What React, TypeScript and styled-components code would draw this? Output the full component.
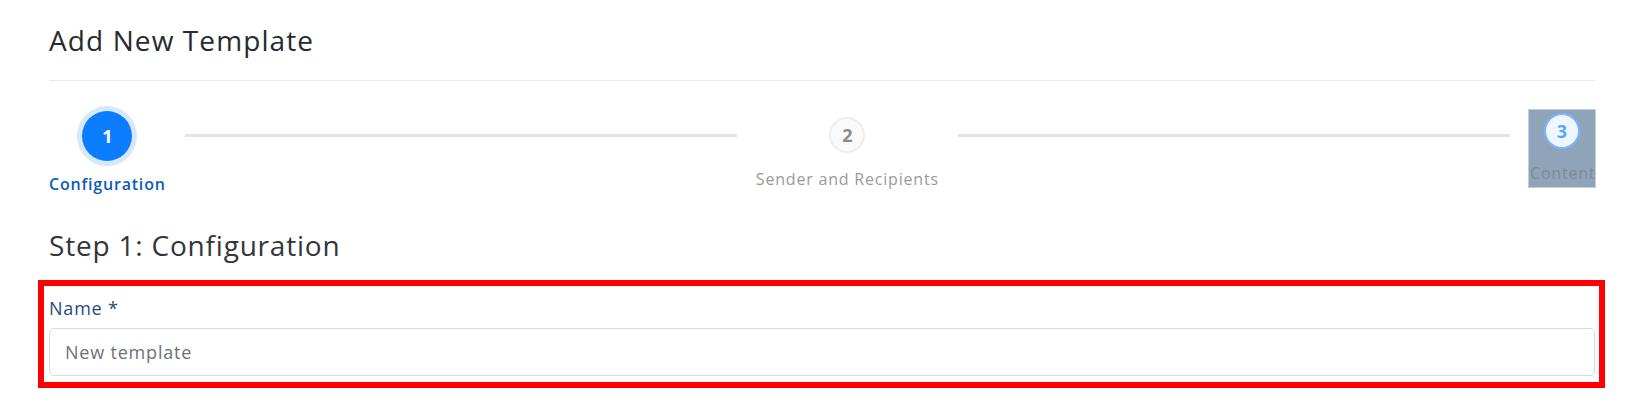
import React from "react";
import styled, { createGlobalStyle, css } from "styled-components";

const Global = createGlobalStyle`
  html, body { margin: 0; padding: 0; background: #ffffff; }
  body { font-family: "Open Sans", "Noto Sans", sans-serif; color: #2b2f33; }
  * { box-sizing: border-box; }
`;

const Page = styled.div`
  padding: 0 45px 0 49px;
`;

const Header = styled.div`
  height: 81px;
  border-bottom: 1px solid #e9e9ec;
  padding-top: 23px;
`;

const Title = styled.h1`
  margin: 0;
  font-size: 28px;
  line-height: 34px;
  font-weight: 400;
  letter-spacing: 1.1px;
  color: #272b30;
`;

const StepsRow = styled.div`
  display: flex;
  align-items: flex-start;
`;

type StepState = "active" | "idle" | "hover";

const StepItem = styled.div<{ $state: StepState }>`
  position: relative;
  display: flex;
  flex-direction: column;
  align-items: center;
  flex: none;
  ${({ $state }) =>
    $state === "active"
      ? css`
          margin-top: 30px;
          gap: 12px;
        `
      : $state === "idle"
      ? css`
          margin-top: 36px;
          gap: 15px;
        `
      : css`
          margin-top: 29px;
          width: 66px;
          gap: 13px;
          padding: 3px 0 3px;
          background: #8fa4b8;
          outline: 1px solid #c4ced8;
        `}
`;

const HoverZone = styled.div`
  position: absolute;
  left: -37px;
  right: -38px;
  top: -37px;
  bottom: -37px;
  background: #fbfbfc;
  z-index: -1;
`;

const Circle = styled.div<{ $state: StepState }>`
  display: flex;
  align-items: center;
  justify-content: center;
  border-radius: 50%;
  font-weight: 700;
  font-size: 18px;
  ${({ $state }) =>
    $state === "active"
      ? css`
          width: 50px;
          height: 50px;
          background: #0d7dff;
          color: #ffffff;
          box-shadow: 0 0 0 5px #d8e8fb, 0 2px 10px rgba(0, 0, 0, 0.06);
        `
      : $state === "idle"
      ? css`
          width: 36px;
          height: 36px;
          background: #fafafa;
          border: 2px solid #eeeeee;
          color: #8a8a8a;
        `
      : css`
          width: 36px;
          height: 36px;
          background: #eef6ff;
          border: 2px solid #79b6ff;
          color: #5aa5ff;
        `}
`;

const StepLabel = styled.div<{ $state: StepState }>`
  font-size: 16px;
  line-height: 22px;
  letter-spacing: 0.8px;
  white-space: nowrap;
  ${({ $state }) =>
    $state === "active"
      ? css`
          color: #0d5cb6;
          font-weight: 600;
        `
      : $state === "idle"
      ? css`
          color: #9a9a9a;
        `
      : css`
          color: #7c8a98;
          width: 66px;
          overflow: hidden;
          padding-left: 1px;
        `}
`;

const Connector = styled.div`
  flex: 1;
  height: 3px;
  margin: 53px 19px 0;
  background: #e1e4ea;
`;

const SectionTitle = styled.h2`
  margin: 33px 0 0;
  font-size: 28px;
  line-height: 34px;
  font-weight: 400;
  letter-spacing: 0.8px;
  color: #333639;
`;

const Highlight = styled.div`
  margin: 18px -10px 0 -11px;
  border: 6px solid #ff0000;
  padding: 10px 4px 6px 5px;
`;

const FieldLabel = styled.label`
  display: block;
  font-size: 18px;
  line-height: 24px;
  letter-spacing: 0.8px;
  color: #1f4d7a;
  margin-bottom: 8px;
`;

const TextInput = styled.input`
  display: block;
  width: 100%;
  height: 48px;
  border: 1px solid #d5dbe1;
  border-radius: 5px;
  padding: 0 15px;
  font-family: inherit;
  font-size: 18px;
  letter-spacing: 0.8px;
  color: #333;
  outline: none;
  &::placeholder {
    color: #6c737a;
  }
`;

const steps: { n: number; label: string; state: StepState }[] = [
  { n: 1, label: "Configuration", state: "active" },
  { n: 2, label: "Sender and Recipients", state: "idle" },
  { n: 3, label: "Content", state: "hover" },
];

export default function App() {
  return (
    <>
      <Global />
      <Page>
        <Header>
          <Title>Add New Template</Title>
        </Header>
        <StepsRow>
          {steps.map((s, i) => (
            <React.Fragment key={s.n}>
              {i > 0 && <Connector />}
              <StepItem $state={s.state}>
                {s.state === "hover" && <HoverZone />}
                <Circle $state={s.state}>{s.n}</Circle>
                <StepLabel $state={s.state}>{s.label}</StepLabel>
              </StepItem>
            </React.Fragment>
          ))}
        </StepsRow>
        <SectionTitle>Step 1: Configuration</SectionTitle>
        <Highlight>
          <FieldLabel htmlFor="name">Name *</FieldLabel>
          <TextInput id="name" placeholder="New template" />
        </Highlight>
      </Page>
    </>
  );
}
